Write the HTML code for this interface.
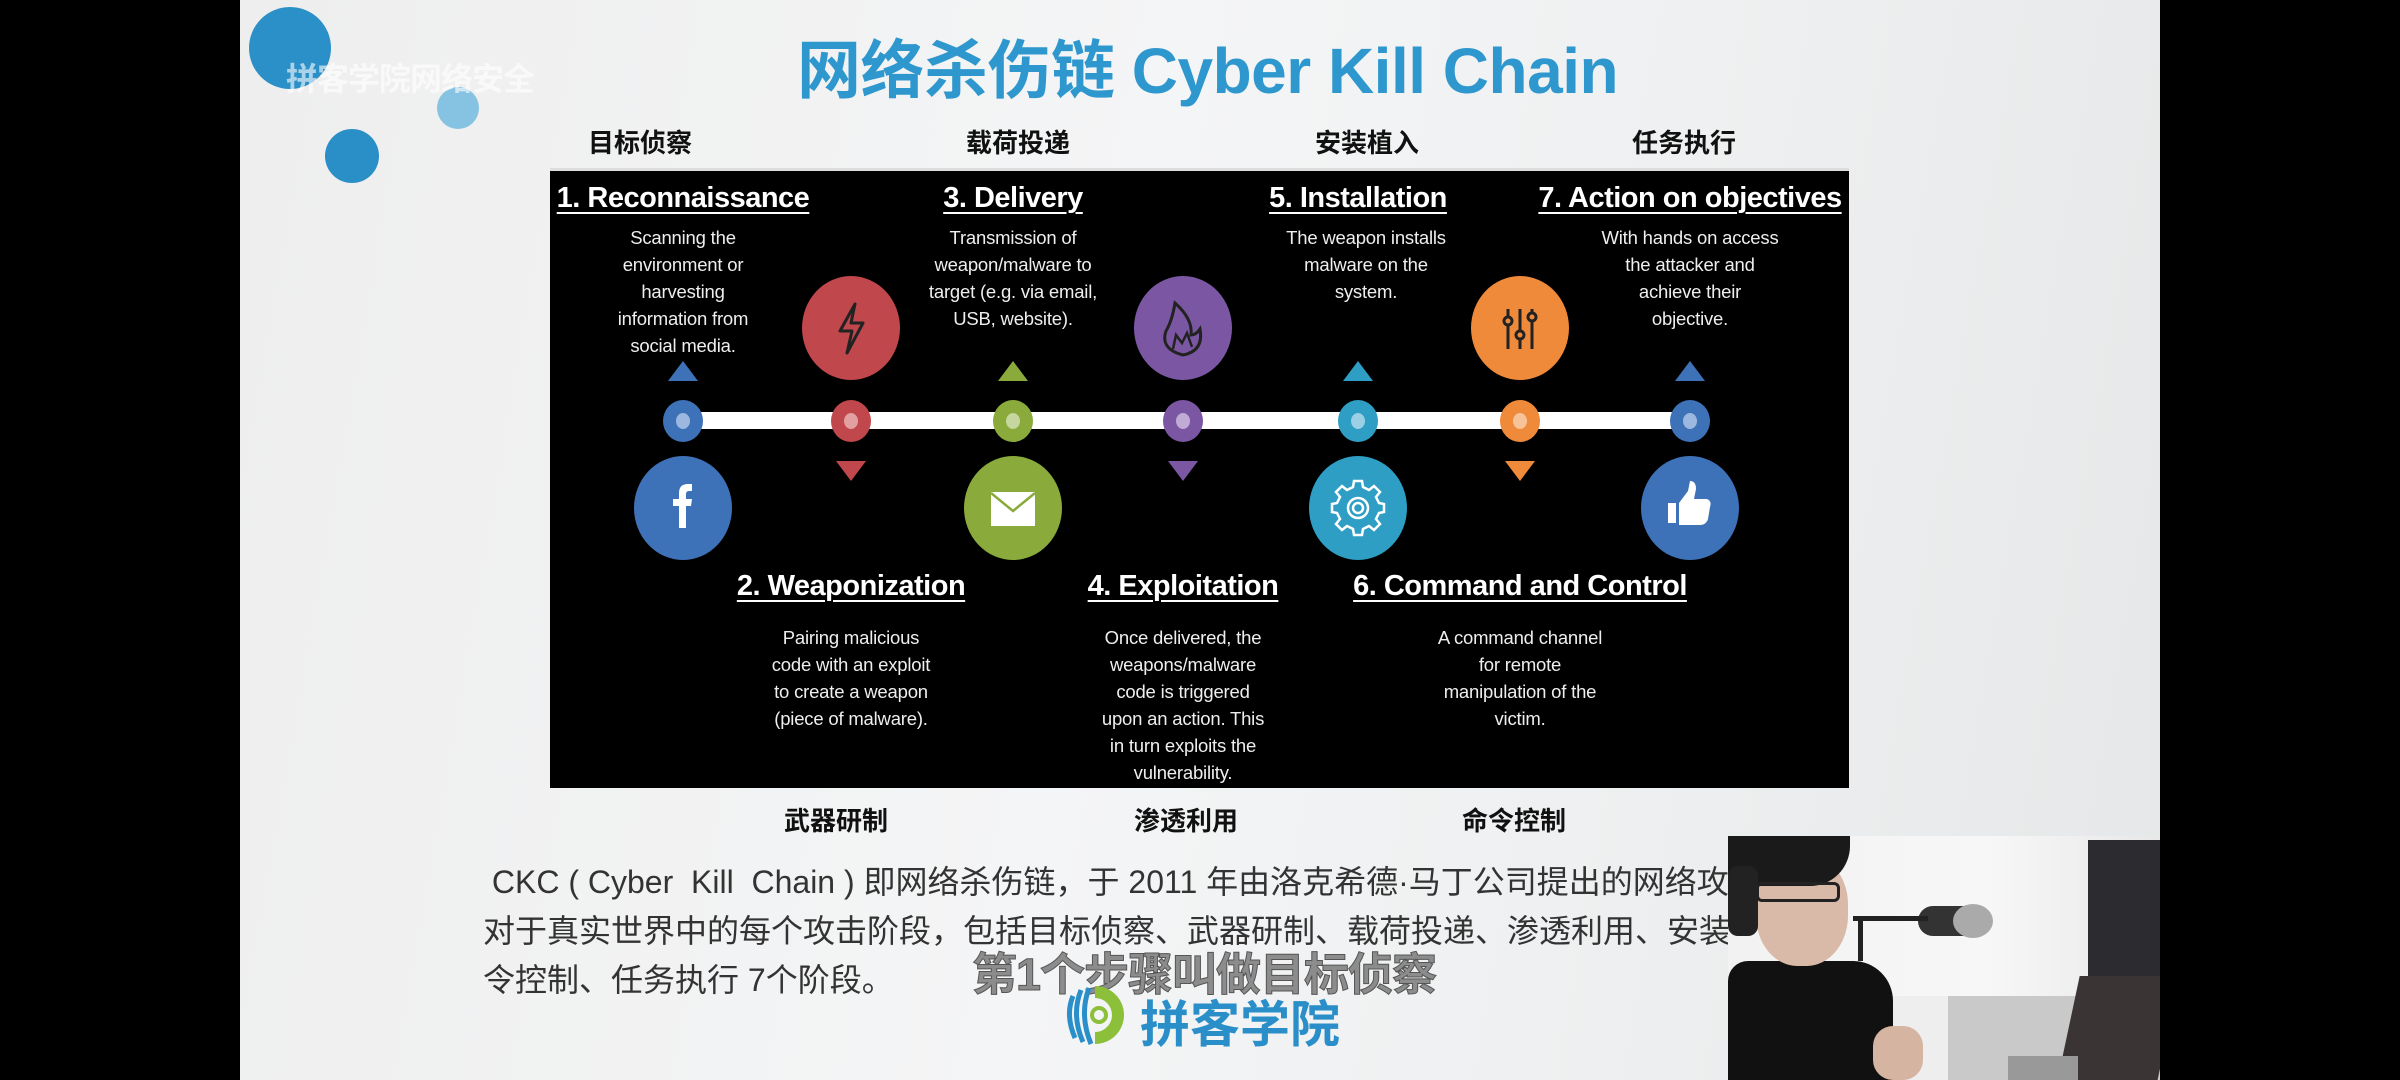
<!DOCTYPE html>
<html><head><meta charset="utf-8">
<style>
*{margin:0;padding:0;box-sizing:border-box}
html,body{width:2400px;height:1080px;overflow:hidden;background:#000}
#slide{position:absolute;left:240px;top:0;width:1920px;height:1080px;background:linear-gradient(100deg,#eeeeee 0%,#f4f5f6 45%,#eef0f1 70%,#e6e7e8 100%);overflow:hidden}
.abs{position:absolute}
.cn{font-family:"Liberation Sans","Noto Sans CJK SC",sans-serif}
.lab{position:absolute;font-weight:bold;font-size:26px;color:#111;transform:translateX(-50%);white-space:nowrap;top:123px}
.lab2{top:801px}
#panel{position:absolute;left:550px;top:168px;width:1299px;height:620px;background:#000;border-top:3px solid #ddd}
.t{position:absolute;color:#fff;font-family:"Liberation Sans",sans-serif;font-weight:bold;font-size:29px;text-decoration:underline;text-decoration-thickness:2px;text-underline-offset:5px;white-space:nowrap;transform:translateX(-50%);letter-spacing:-0.5px}
.d{position:absolute;color:#eee;font-family:"Liberation Sans",sans-serif;font-size:18.5px;line-height:27px;text-align:center;white-space:nowrap;transform:translateX(-50%);letter-spacing:-0.2px}
</style></head><body>
<div id="slide">
  <div class="abs" style="left:9px;top:7px;width:82px;height:82px;border-radius:50%;background:#2b90c7"></div>
  <div class="abs" style="left:197px;top:87px;width:42px;height:42px;border-radius:50%;background:#86c2e2"></div>
  <div class="abs" style="left:85px;top:129px;width:54px;height:54px;border-radius:50%;background:#2b8fc7"></div>
  <div class="abs cn" style="left:46px;top:54px;font-size:32px;font-weight:bold;color:rgba(255,255,255,0.6);letter-spacing:-1px">拼客学院网络安全</div>
  <div class="abs cn" style="left:557px;top:20px;font-size:64px;font-weight:bold;color:#2e97ce;white-space:nowrap;letter-spacing:-0.5px">网络杀伤链 Cyber Kill Chain</div>
  <div class="lab cn" style="left:400px">目标侦察</div>
  <div class="lab cn" style="left:778px">载荷投递</div>
  <div class="lab cn" style="left:1127px">安装植入</div>
  <div class="lab cn" style="left:1444px">任务执行</div>
  <div class="lab lab2 cn" style="left:596px">武器研制</div>
  <div class="lab lab2 cn" style="left:946px">渗透利用</div>
  <div class="lab lab2 cn" style="left:1274px">命令控制</div>
  <div class="abs cn" style="left:243px;top:858px;font-size:32px;line-height:49px;color:#333;white-space:nowrap">&nbsp;CKC ( Cyber&nbsp; Kill&nbsp; Chain ) 即网络杀伤链，于 2011 年由洛克希德·马丁公司提出的网络攻击模型，<br>对于真实世界中的每个攻击阶段，包括目标侦察、武器研制、载荷投递、渗透利用、安装植入、命<br>令控制、任务执行 7个阶段。</div>
  <div class="abs cn" style="left:732px;top:938px;font-size:45px;font-weight:bold;color:#8c8c8c;-webkit-text-stroke:1px #555;white-space:nowrap;letter-spacing:-1px">第1个步骤叫做目标侦察</div>
  <svg class="abs" style="left:825px;top:982px" width="60" height="66" viewBox="0 0 60 66">
    <path d="M30 4 A29 29 0 1 1 30 62 L30 50 A17 17 0 1 0 30 16 Z" fill="#8cbf3a"/>
    <path d="M8 14 Q0 33 10 56" stroke="#2a8fc9" stroke-width="5" fill="none"/>
    <path d="M16 8 Q6 33 18 60" stroke="#2a8fc9" stroke-width="5" fill="none"/>
    <path d="M24 6 Q14 33 26 62" stroke="#2a8fc9" stroke-width="5" fill="none"/>
    <circle cx="34" cy="33" r="7" fill="none" stroke="#8cbf3a" stroke-width="4"/>
  </svg>
  <div class="abs cn" style="left:900px;top:985px;font-size:50px;font-weight:bold;color:#2a8fc9;white-space:nowrap">拼客学院</div>
</div>

<div id="panel">
<svg class="abs" style="left:0;top:0" width="1299" height="620" viewBox="0 0 1299 620">
  <rect x="133" y="241" width="1008" height="17" fill="#fff"/>
  <g>
    <ellipse cx="133" cy="250" rx="20" ry="21" fill="#3e72b8"/><ellipse cx="133" cy="250" rx="7" ry="8" fill="#9db8e0"/>
    <ellipse cx="301" cy="250" rx="20" ry="21" fill="#c0474b"/><ellipse cx="301" cy="250" rx="7" ry="8" fill="#e3a0a2"/>
    <ellipse cx="463" cy="250" rx="20" ry="21" fill="#8aaa3c"/><ellipse cx="463" cy="250" rx="7" ry="8" fill="#c5d79e"/>
    <ellipse cx="633" cy="250" rx="20" ry="21" fill="#7b57a3"/><ellipse cx="633" cy="250" rx="7" ry="8" fill="#c0abd6"/>
    <ellipse cx="808" cy="250" rx="20" ry="21" fill="#2e9ec4"/><ellipse cx="808" cy="250" rx="7" ry="8" fill="#99d0e4"/>
    <ellipse cx="970" cy="250" rx="20" ry="21" fill="#ef8a3a"/><ellipse cx="970" cy="250" rx="7" ry="8" fill="#f7c49a"/>
    <ellipse cx="1140" cy="250" rx="20" ry="21" fill="#3e72b8"/><ellipse cx="1140" cy="250" rx="7" ry="8" fill="#9db8e0"/>
  </g>
  <polygon points="133,190 118,210 148,210" fill="#3e72b8"/>
  <polygon points="463,190 448,210 478,210" fill="#8aaa3c"/>
  <polygon points="808,190 793,210 823,210" fill="#2e9ec4"/>
  <polygon points="1140,190 1125,210 1155,210" fill="#3e72b8"/>
  <polygon points="301,310 286,290 316,290" fill="#c0474b"/>
  <polygon points="633,310 618,290 648,290" fill="#7b57a3"/>
  <polygon points="970,310 955,290 985,290" fill="#ef8a3a"/>
  <ellipse cx="301" cy="157" rx="49" ry="52" fill="#c0474b"/>
  <path d="M305 133 L290 160 L302 160 L297 182 L313 152 L301 152 Z" fill="none" stroke="#222" stroke-width="3" stroke-linejoin="round"/>
  <ellipse cx="633" cy="157" rx="49" ry="52" fill="#7b57a3"/>
  <path d="M625 132 Q622 150 616 160 Q610 178 633 184 Q654 180 650 158 Q646 164 641 164 Q643 148 625 132 Z" fill="none" stroke="#222" stroke-width="3"/>
  <path d="M623 178 L626 164 L632 172 L637 162 L642 176" fill="none" stroke="#222" stroke-width="2.5"/>
  <ellipse cx="970" cy="157" rx="49" ry="52" fill="#ef8a3a"/>
  <g fill="none" stroke="#222" stroke-width="3">
    <line x1="958" y1="138" x2="958" y2="178"/><line x1="970" y1="138" x2="970" y2="178"/><line x1="982" y1="138" x2="982" y2="178"/>
    <circle cx="958" cy="150" r="4" fill="#ef8a3a"/><circle cx="970" cy="164" r="4" fill="#ef8a3a"/><circle cx="982" cy="146" r="4" fill="#ef8a3a"/>
  </g>
  <ellipse cx="133" cy="337" rx="49" ry="52" fill="#3e72b8"/>
  <path d="M129 357 L129 335 L123 335 L123 328 L129 328 L129 322 Q129 313 138 313 L142 313 L142 320 L139 320 Q136 320 136 323 L136 328 L142 328 L141 335 L136 335 L136 357 Z" fill="#fff"/>
  <ellipse cx="463" cy="337" rx="49" ry="52" fill="#8aaa3c"/>
  <rect x="441" y="321" width="44" height="34" fill="#fff"/>
  <path d="M441 322 L463 340 L485 322" fill="none" stroke="#8aaa3c" stroke-width="2.5"/>
  <ellipse cx="808" cy="337" rx="49" ry="52" fill="#2e9ec4"/>
  <g fill="none" stroke="#fff" stroke-width="2.5">
    <path d="M804 313 L812 313 L813 319 L819 322 L824 318 L830 324 L826 329 L829 335 L834 336 L834 344 L829 345 L826 351 L830 356 L824 362 L819 358 L813 361 L812 367 L804 367 L803 361 L797 358 L792 362 L786 356 L790 351 L787 345 L782 344 L782 336 L787 335 L790 329 L786 324 L792 318 L797 322 L803 319 Z" transform="translate(0,-3)"/>
    <circle cx="808" cy="337" r="10"/><circle cx="808" cy="337" r="5"/>
  </g>
  <ellipse cx="1140" cy="337" rx="49" ry="52" fill="#3e72b8"/>
  <rect x="1118" y="332" width="8" height="20" fill="#fff"/>
  <path d="M1129 332 L1138 320 L1140 310 Q1146 310 1146 318 L1144 328 L1157 328 Q1162 330 1160 336 L1158 348 Q1156 354 1150 354 L1129 354 Z" fill="#fff"/>
</svg>
  <div class="t" style="left:133px;top:11px">1. Reconnaissance</div>
  <div class="t" style="left:463px;top:11px">3. Delivery</div>
  <div class="t" style="left:808px;top:11px">5. Installation</div>
  <div class="t" style="left:1140px;top:11px">7. Action on objectives</div>
  <div class="t" style="left:301px;top:399px">2. Weaponization</div>
  <div class="t" style="left:633px;top:399px">4. Exploitation</div>
  <div class="t" style="left:970px;top:399px">6. Command and Control</div>
  <div class="d" style="left:133px;top:53px">Scanning the<br>environment or<br>harvesting<br>information from<br>social media.</div>
  <div class="d" style="left:463px;top:53px">Transmission of<br>weapon/malware to<br>target (e.g. via email,<br>USB, website).</div>
  <div class="d" style="left:816px;top:53px">The weapon installs<br>malware on the<br>system.</div>
  <div class="d" style="left:1140px;top:53px">With hands on access<br>the attacker and<br>achieve their<br>objective.</div>
  <div class="d" style="left:301px;top:453px">Pairing malicious<br>code with an exploit<br>to create a weapon<br>(piece of malware).</div>
  <div class="d" style="left:633px;top:453px">Once delivered, the<br>weapons/malware<br>code is triggered<br>upon an action. This<br>in turn exploits the<br>vulnerability.</div>
  <div class="d" style="left:970px;top:453px">A command channel<br>for remote<br>manipulation of the<br>victim.</div>
</div>

<div class="abs" style="left:1728px;top:836px;width:432px;height:244px;background:#eeeeee;overflow:hidden">
  <div class="abs" style="left:0;top:0;width:432px;height:160px;background:linear-gradient(90deg,#f2f2f2,#f7f7f7 60%,#e8e8e8)"></div>
  <div class="abs" style="left:220px;top:160px;width:212px;height:84px;background:#c9c9c9"></div>
  <div class="abs" style="left:360px;top:4px;width:72px;height:150px;background:#2b2b30"></div>
  <div class="abs" style="left:340px;top:140px;width:100px;height:110px;background:#3a3435;transform:skewX(-12deg)"></div>
  <div class="abs" style="left:280px;top:220px;width:70px;height:24px;background:#999"></div>
  <div class="abs" style="left:190px;top:70px;width:60px;height:30px;border-radius:15px;background:#333"></div>
  <div class="abs" style="left:225px;top:68px;width:40px;height:34px;border-radius:50%;background:#aaa"></div>
  <div class="abs" style="left:125px;top:80px;width:75px;height:5px;background:#222"></div>
  <div class="abs" style="left:130px;top:80px;width:5px;height:45px;background:#222"></div>
  <div class="abs" style="left:0;top:125px;width:165px;height:124px;background:#111;border-radius:20px 40px 0 0"></div>
  <div class="abs" style="left:28px;top:18px;width:92px;height:112px;border-radius:45%;background:#d9b9a8"></div>
  <div class="abs" style="left:0;top:0;width:122px;height:50px;border-radius:0 0 40px 10px;background:#1a1a1a"></div>
  <div class="abs" style="left:0;top:30px;width:30px;height:70px;border-radius:10px;background:#222"></div>
  <div class="abs" style="left:28px;top:46px;width:84px;height:20px;border:3px solid #222;border-radius:6px"></div>
  <div class="abs" style="left:145px;top:190px;width:50px;height:54px;border-radius:20px;background:#d6b4a2"></div>
</div>
</body></html>
